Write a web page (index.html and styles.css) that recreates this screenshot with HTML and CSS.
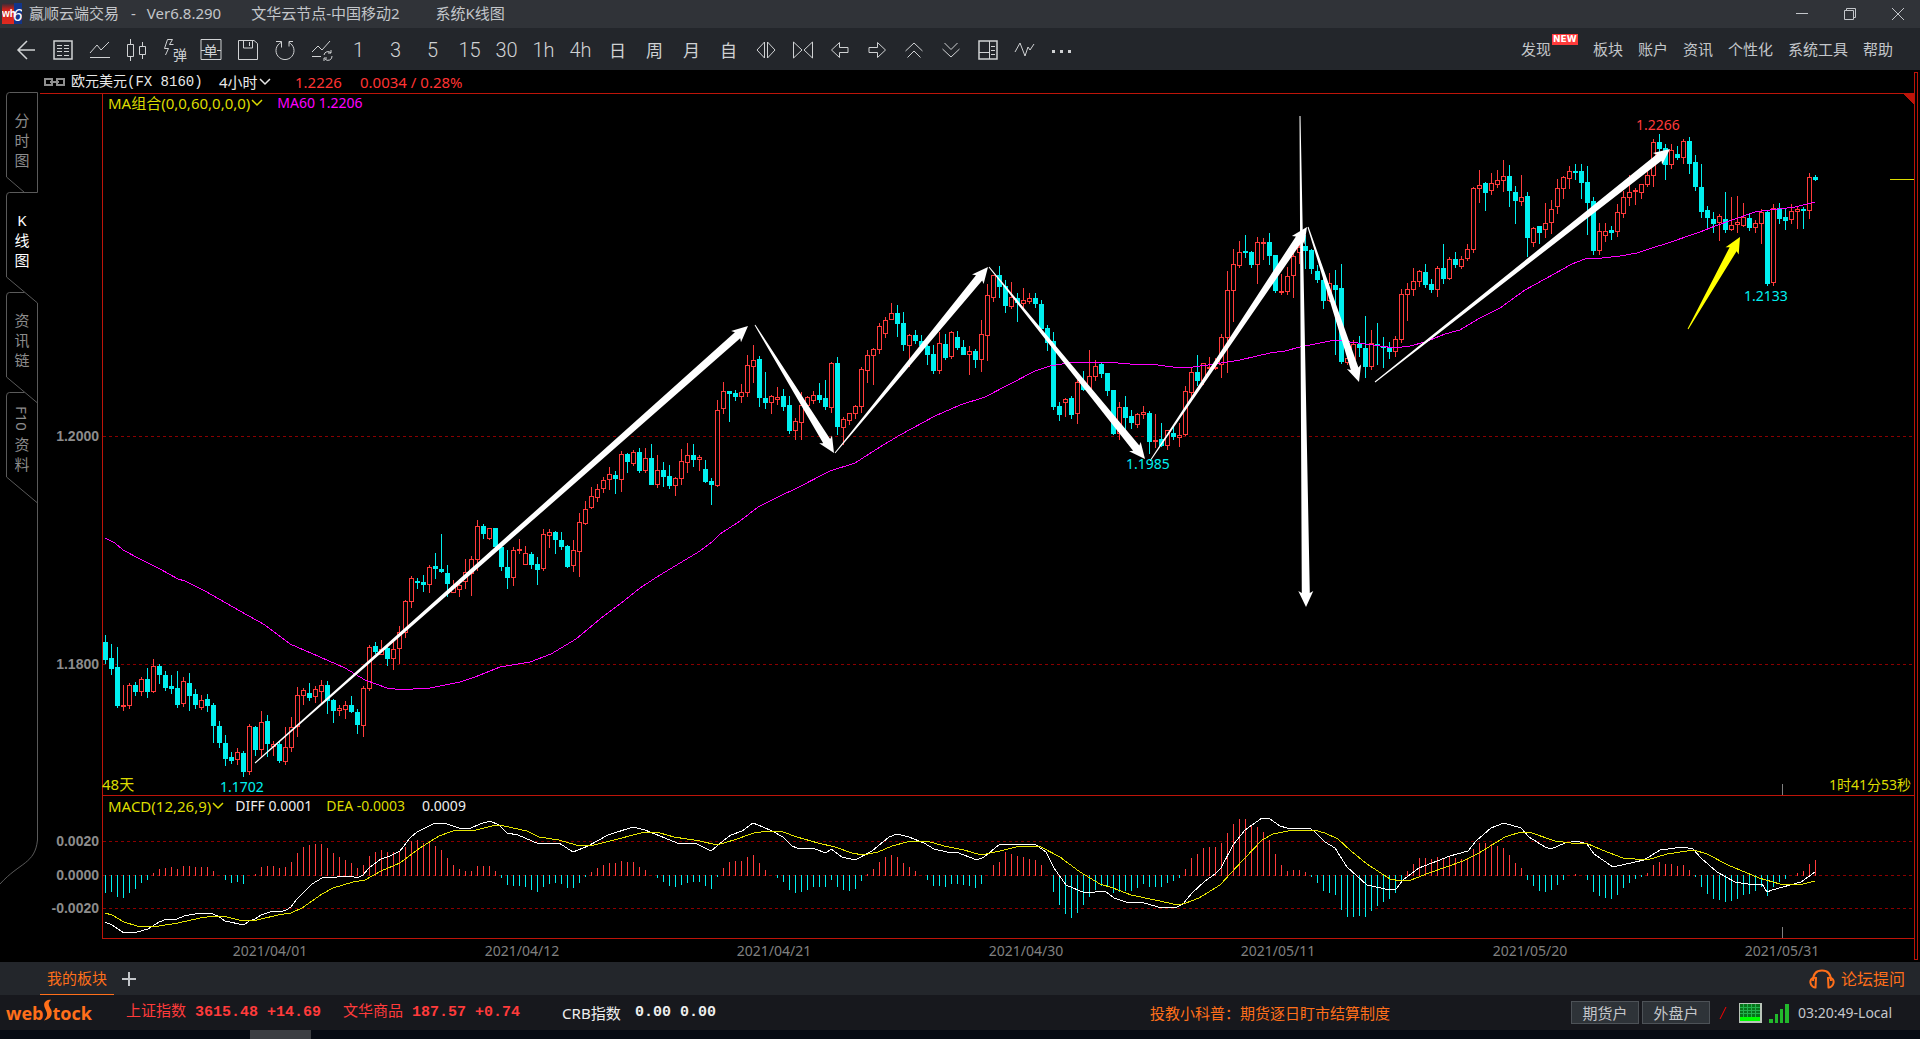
FILE: index.html
```html
<!DOCTYPE html>
<html lang="zh-CN">
<head>
<meta charset="utf-8">
<title>赢顺云端交易</title>
<link rel="stylesheet" href="styles.css">
</head>
<body>
<header class="titlebar">
  <svg class="app-logo" viewBox="0 0 20 21" aria-hidden="true">
    <defs><linearGradient id="lg" x1="0" y1="0" x2="0" y2="1"><stop offset="0" stop-color="#2a2f3a"/><stop offset=".3" stop-color="#c8201a"/><stop offset="1" stop-color="#e02a20"/></linearGradient></defs>
    <rect width="12" height="21" fill="url(#lg)"/><rect x="12" width="8" height="21" fill="#12358a"/>
    <text x="0" y="14" class="logo-wh">wh</text><text x="11" y="18" class="logo-six">6</text>
  </svg>
  <h1 class="title">赢顺云端交易</h1><span class="title-dash">-</span><span class="title-ver">Ver6.8.290</span>
  <span class="title-node">文华云节点-中国移动2</span><span>系统K线图</span>
  <div class="window-buttons">
    <button aria-label="最小化"><svg viewBox="0 0 12 12"><path d="M0 5.500H12"/></svg></button>
    <button aria-label="还原"><svg viewBox="0 0 12 12"><path d="M.5 2.500h9v9h-9zM2.500 2.500v-2h9v9h-2"/></svg></button>
    <button aria-label="关闭"><svg viewBox="0 0 12 12"><path d="M0 0L12 12M12 0L0 12"/></svg></button>
  </div>
</header>

<div class="toolbar">
  <div class="tools">
    <button aria-label="返回"><svg viewBox="0 0 24 24"><path class="bold" d="M4 12H21M13 3L4 12L13 21"/></svg></button>
    <button aria-label="报价"><svg viewBox="0 0 24 24"><path class="bold" d="M3 3h18v18H3z"/><path d="M6 7.500h5M13 7.500h5M6 10.500h5M13 10.500h5M6 13.500h5M13 13.500h5M6 17.500h5M13 17.500h5"/></svg></button>
    <button aria-label="分时"><svg viewBox="0 0 24 24"><path d="M2 15L9 7L13 12L21 4M2 19.500H22"/></svg></button>
    <button aria-label="K线"><svg viewBox="0 0 24 24"><path d="M2.500 6.500h6v12h-6zM5.500 1v5M5.500 18v5M14.500 8.500h6v8h-6zM17.500 4v4M17.500 16v5"/></svg></button>
    <button aria-label="弹"><svg viewBox="0 0 24 24"><path d="M5.500 1.500L2.500 10.500H6.500L3.500 17M5.500 1.500h5l-3 5h4"/></svg><span class="glyph-over small">弹</span></button>
    <button aria-label="下单"><svg viewBox="0 0 24 24"><path d="M2 1.500h20v20H2zM2 12.500h4M18 12.500h4"/></svg><span class="glyph-over">单</span></button>
    <button aria-label="保存"><svg viewBox="0 0 24 24"><path d="M2.500 2.500H18l3.500 3v16h-19zM7.500 3v7h9v-7M13.500 4v4"/></svg></button>
    <button aria-label="刷新"><svg viewBox="0 0 24 24"><path d="M8 4.500A9 9 0 1 0 16 4.500M3 3.500h5.500v6M20 3.500h-4v5"/></svg></button>
    <button aria-label="切换"><svg viewBox="0 0 24 24"><path d="M2 14L8 8L12 12L20 3M2 18.500H11M14 17a4 4 0 0 1 7-2M21 12v3h-3M22 18a4 4 0 0 1-7 3M14 23v-3h3"/></svg></button>
    <button>1</button><button>3</button><button>5</button><button>15</button><button>30</button><button>1h</button><button>4h</button>
    <button class="cjk">日</button><button class="cjk">周</button><button class="cjk">月</button><button class="cjk">自</button>
    <button aria-label="缩小"><svg viewBox="0 0 24 24"><path d="M10.500 4v16L3 12zM13.500 4v16L21 12z"/></svg></button>
    <button aria-label="放大"><svg viewBox="0 0 24 24"><path d="M2.500 4v16L11 12zM21.500 4v16L13 12z"/></svg></button>
    <button aria-label="左移"><svg viewBox="0 0 24 24"><path d="M11.500 4.500V9.500H20v5H11.500v5L3.500 12z"/></svg></button>
    <button aria-label="右移"><svg viewBox="0 0 24 24"><path d="M12.500 4.500V9.500H4v5h8.500v5L20.500 12z"/></svg></button>
    <button aria-label="上翻"><svg viewBox="0 0 24 24"><path d="M3.500 13L12 5L20.500 13M5.500 19.500L12 13L18.500 19.500"/></svg></button>
    <button aria-label="下翻"><svg viewBox="0 0 24 24"><path d="M3.500 11L12 19L20.500 11M5.500 5L12 11.500L18.500 5"/></svg></button>
    <button aria-label="分栏"><svg viewBox="0 0 24 24"><path class="bold" d="M3 3h18v18H3z"/><path d="M13.500 3v18M3 14.500h10M15 8.500h4M15 12.500h4M15 16.500h4"/></svg></button>
    <button aria-label="画线"><svg viewBox="0 0 24 24"><path d="M2 14L7 5L12 18L15 9L17 12L21 6"/></svg></button>
    <button aria-label="更多"><svg viewBox="0 0 24 24"><path class="fill" d="M2 12h3v3H2zM10 12h3v3h-3zM18 12h3v3h-3z"/></svg></button>
  </div>
  <nav class="menu">
    <a href="#" class="discover">发现<span class="new">NEW</span></a><a href="#">板块</a><a href="#">账户</a><a href="#">资讯</a><a href="#">个性化</a><a href="#">系统工具</a><a href="#">帮助</a>
  </nav>
</div>

<main class="workspace">
  <nav class="side">
    <svg class="side-outline" viewBox="0 70 40 892" aria-hidden="true"><path d="M24.500 192.500L6.500 177V96Q6.500 92.500 9.500 92.500H37.500V192.500H9.500Q6.500 192.500 6.500 196V277L37.500 303V840C35 864 20 862 0 884M24.500 292.500H9.500Q6.500 292.500 6.500 296V377L37.500 403M24.500 392.500H9.500Q6.500 392.500 6.500 396V477L37.500 503"/></svg>
    <button><span>分时图</span></button>
    <button class="active"><span>K线图</span></button>
    <button><span>资讯链</span></button>
    <button><span><i>F10</i>资料</span></button>
  </nav>
  <section class="chart">
    <div class="quote">
      <svg class="link-icon" viewBox="0 0 21 8"><path d="M8 5v2H1V1h7v2M13 3V1h7v6h-7V5M6 4h9"/></svg>
      <span class="symbol">欧元美元(FX 8160)</span>
      <button class="period">4小时<svg class="chev" viewBox="0 0 12 8"><path d="M1 1L6 6L11 1"/></svg></button>
      <span class="last">1.2226</span><span class="change">0.0034 / 0.28%</span>
    </div>
    <div class="plot">
      <svg id="plot" class="canvas" viewBox="40 93 1874 869" role="img" aria-label="K线图">
        <g class="grid"><path d="M103 436.500H1912M103 664.500H1912M103 841.500H1912M103 875.500H1912M103 908.500H1912"/></g>
        <g class="frame"><path d="M40 93.500H1914M102.500 93V938.500H1914M102 795.500H1914"/><path class="corner" d="M1903 93H1914V105z"/></g>
        <g class="ticks"><path d="M1782.500 784V795M1782.500 927V938"/></g>
        <path class="now" d="M1890 179.500H1914"/>
        <g id="hist"></g><g id="candles"></g><g id="lines"></g><g id="arrows"></g>
        <g class="axis">
          <text x="99" y="441">1.2000</text><text x="99" y="669">1.1800</text>
          <text x="99" y="846">0.0020</text><text x="99" y="880">0.0000</text><text x="99" y="913">-0.0020</text>
        </g>
        <g class="dates">
          <text x="270" y="956">2021/04/01</text><text x="522" y="956">2021/04/12</text><text x="774" y="956">2021/04/21</text><text x="1026" y="956">2021/04/30</text><text x="1278" y="956">2021/05/11</text><text x="1530" y="956">2021/05/20</text><text x="1782" y="956">2021/05/31</text>
        </g>
        <g class="marks">
          <text class="hi" x="1636" y="130">1.2266</text><text x="1744" y="301">1.2133</text><text x="1126" y="469">1.1985</text><text x="220" y="792">1.1702</text>
          <text class="info days" x="102" y="790">48天</text><text class="info end" x="1911" y="790">1时41分53秒</text>
        </g>
      </svg>
      <div class="legend legend-main">
        <button>MA组合(0,0,60,0,0,0)<svg class="chev" viewBox="0 0 12 8"><path d="M1 1L6 6L11 1"/></svg></button><span class="ma">MA60 1.2206</span>
      </div>
      <div class="legend legend-macd">
        <button>MACD(12,26,9)<svg class="chev" viewBox="0 0 12 8"><path d="M1 1L6 6L11 1"/></svg></button><span class="diff">DIFF 0.0001</span><span class="dea">DEA -0.0003</span><span class="diff">0.0009</span>
      </div>
    </div>
  </section>
  <div class="rail"></div>
</main>

<div class="tabs">
  <button class="tab">我的板块</button>
  <button class="add" aria-label="添加"><svg viewBox="0 0 14 14"><path d="M7 0V14M0 7H14"/></svg></button>
  <a href="#" class="forum"><svg viewBox="0 0 26 20"><path d="M4 12C4 4 8 1.500 13 1.500S22 4 22 12"/><path d="M7 9C2 8 1 12 1.500 14S4 19 6.500 18.500zM19 9C24 8 25 12 24.500 14S22 19 19.500 18.500z"/></svg>论坛提问</a>
</div>

<footer class="status">
  <span class="brand">web<svg viewBox="0 0 10 24" aria-hidden="true"><path d="M9 0C2 0 0 4 2 9C4 14 7 17 1 23C9 22 11 16 9 11C6 6 5 4 9 0z"/></svg>tock</span>
  <span class="idx">上证指数 <b>3615.48 +14.69</b></span><span class="idx">文华商品 <b>187.57 +0.74</b></span>
  <span class="crb">CRB指数</span><b class="crb-val">0.00 0.00</b>
  <a href="#" class="news">投教小科普：期货逐日盯市结算制度</a>
  <div class="session">
    <button>期货户</button><button>外盘户</button>
    <svg class="slash" viewBox="0 0 8 14"><path d="M1 13L7 1"/></svg>
    <svg class="meter" viewBox="0 0 23 20"><path class="m-bg" d="M0 0H23V20H0z"/><path class="m-grid" d="M1 1H21V14H1z"/><path class="m-dots" d="M1 4.500H21M1 7.500H21M1 10.500H21M4.500 1V14M8.500 1V14M12.500 1V14M16.500 1V14"/><path class="m-fill" d="M1 14H21V18H1z"/></svg>
    <svg class="signal" viewBox="0 0 20 20"><path d="M0 16h4v4H0zM6 11h3v9H6zM11 6h3v14h-3zM16 1h4v19h-4z"/></svg>
    <span class="clock">03:20:49-Local</span>
  </div>
</footer>
<div class="taskbar"><span class="task"></span></div>
<script src="chart.js"></script>
</body>
</html>
```
FILE: styles.css
```css
* { box-sizing: border-box; }
body {
  margin: 0; min-height: 100vh; display: flex; flex-direction: column;
  background: #000; color: #c3c6ca; overflow-x: hidden;
  font: 15px/20px "Noto Sans", "Noto Sans CJK SC", sans-serif;
}
button { background: none; border: 0; padding: 0; color: inherit; font: inherit; }
a { color: inherit; text-decoration: none; }
svg { display: block; fill: none; stroke: currentColor; }

.titlebar { display: flex; align-items: center; height: 28px; padding: 0 16px 2px 2px; background: #303338; }
.app-logo { width: 20px; height: 21px; stroke: none; margin-right: 7px; }
.logo-wh { font: bold 10px "Liberation Sans", sans-serif; fill: #fff; }
.logo-six { font: italic 17px "Liberation Sans", sans-serif; fill: #fff; }
.title { font-size: 15px; font-weight: 400; margin: 0; }
.title-dash { margin: 0 11px 0 12px; }
.title-ver { margin-right: 30px; }
.title-node { margin-right: 36px; }
.window-buttons { margin-left: auto; display: flex; gap: 36px; padding-top: 2px; }
.window-buttons svg { width: 12px; height: 12px; }

.toolbar { display: flex; align-items: center; justify-content: space-between; height: 42px; padding: 0 27px 0 7px; background: #23262b; }
.tools { display: flex; padding-top: 2px; }
.tools button { position: relative; display: grid; place-items: center; width: 37px; height: 40px; font: 300 20px/24px Roboto, sans-serif; color: #d0d2d4; }
.tools button.cjk { font: 400 17px/24px "Noto Sans CJK SC", sans-serif; }
.tools svg { width: 24px; height: 24px; }
.tools .bold { stroke-width: 1.5; }
.tools .fill { fill: currentColor; stroke: none; }
.glyph-over { position: absolute; font: 14px/16px "Noto Sans CJK SC", sans-serif; }
.glyph-over.small { right: 5px; bottom: 8px; }
.menu { display: flex; gap: 15px; }
.discover { position: relative; margin-right: 27px; }
.new { position: absolute; left: 31px; top: -5px; width: 26px; height: 11px; background: #ff3b3b; color: #fff; font: bold 9px/11px "DejaVu Sans", sans-serif; text-align: center; }

.workspace { display: flex; }
.side { position: relative; width: 40px; flex: none; padding-top: 22px; }
.side-outline { position: absolute; left: 0; top: 0; width: 40px; stroke: #5a5a5a; }
.side button { position: relative; display: grid; place-items: center; width: 38px; height: 100px; padding: 0 0 4px 6px; color: #8c8c8c; }
.side span { display: block; width: 16px; word-break: break-all; text-align: center; line-height: 20px; }
.side i { writing-mode: vertical-rl; font-style: normal; line-height: 16px; }
.side .active { color: #fff; }

.chart { flex: 1; min-width: 0; }
.quote { display: flex; align-items: center; height: 23px; padding-left: 4px; color: #e8e8e8; font-size: 15px; }
.link-icon { width: 21px; height: 8px; margin-right: 6px; stroke: #8f8f8f; stroke-width: 2; }
.symbol { width: 148px; font-family: "Liberation Mono", "Noto Sans CJK SC", monospace; font-size: 14px; }
.period { display: flex; align-items: center; gap: 1px; width: 76px; font-size: 15px; }
.chev { width: 12px; height: 8px; stroke-width: 1.5; }
.last { width: 65px; color: #f33; }
.change { color: #f33; }
.plot { position: relative; }
.canvas { width: 100%; height: auto; }
.legend { position: absolute; left: 68px; display: flex; font-size: 14px; line-height: 20px; }
.legend button { display: flex; align-items: center; gap: 1px; color: #dcdc00; font-size: 15px; }
.legend-main { top: 0; }
.legend-macd { top: 81%; margin-top: -1px; }
.legend .ma { color: #f0f; margin-left: 14px; }
.legend .diff { color: #eee; margin-left: 11px; }
.legend .dea { color: #dcdc00; margin-left: 14px; }
.legend .dea + .diff { margin-left: 17px; }

.frame { stroke: #bd1409; shape-rendering: crispEdges; }
.corner { fill: #bd1409; stroke: none; }
.grid { stroke: #8b0000; stroke-dasharray: 3 3; shape-rendering: crispEdges; }
.ticks { stroke: #808080; }
.now { stroke: #dcdc00; }
.axis { font: bold 14px "Liberation Sans", sans-serif; fill: #8c8c8c; stroke: none; text-anchor: end; }
.dates { font-size: 14px; fill: #808080; stroke: none; text-anchor: middle; }
.marks { font-size: 14px; fill: #00f0f0; stroke: none; }
.hi { fill: #ff3b3b; }
.info { fill: #dcdc00; }
.days { font-size: 15px; }
.end { text-anchor: end; }
.up { fill: #000; stroke: #ff3b3b; shape-rendering: crispEdges; }
.down { fill: #00f0f0; stroke: none; shape-rendering: crispEdges; }
.rise { fill: #ff3b3b; stroke: none; shape-rendering: crispEdges; }
#lines { shape-rendering: crispEdges; }
.ma-line { stroke: #f0f; }
.diff-line { stroke: #fff; }
.dea-line { stroke: #e6e600; }
.arrow { fill: #fff; stroke: none; }
.arrow.yellow { fill: #ff0; }
.rail { flex: none; width: 4px; margin: 2px 2px 2px 0; border: 1px solid #bd1409; }

.tabs { display: flex; align-items: center; height: 33px; padding: 0 15px 0 40px; background: #23262b; color: #ff6f1a; }
.tab { width: 74px; height: 32px; border-bottom: 1px solid #ff6f1a; }
.add { margin-left: 8px; color: #c3c6ca; }
.add svg { width: 14px; height: 14px; stroke-width: 2; }
.forum { display: flex; align-items: center; gap: 6px; margin-left: auto; font-size: 16px; }
.forum svg { width: 26px; height: 20px; stroke-width: 2; }

.status { position: relative; display: flex; align-items: center; height: 35px; padding: 0 25px 0 6px; background: #17181d; }
.brand { display: flex; align-items: center; width: 120px; color: #ff6f1a; font: bold 18px/24px "Open Sans", sans-serif; }
.brand svg { width: 9px; height: 25px; margin-bottom: 4px; fill: currentColor; stroke: none; }
.idx { margin-right: 22px; color: #ff3b3b; font: 15px/20px "Liberation Mono", "Noto Sans CJK SC", monospace; }
.crb { margin-left: 20px; width: 73px; color: #eee; }
.crb-val { color: #eee; font: bold 15px/20px "Liberation Mono", monospace; }
.news { margin-left: auto; color: #ff6f1a; }
.session { display: flex; align-items: center; margin-left: 181px; }
.session button { width: 68px; height: 23px; margin-right: 3px; background: #2e3338; border: 1px solid #4d5257; line-height: 20px; }
.slash { width: 8px; height: 14px; margin: 0 12px 0 6px; stroke: #f00; }
.meter { width: 23px; height: 20px; stroke: none; }
.m-bg { fill: #b9c4b9; }
.m-grid { fill: #07731a; }
.m-dots { stroke: #22b14c; }
.m-fill { fill: #0f0; }
.signal { width: 20px; height: 20px; margin: 0 9px 0 7px; fill: #22b92c; stroke: none; }
.clock { width: 97px; font-size: 14px; white-space: nowrap; }
.taskbar { flex: 1; min-height: 9px; padding-left: 250px; background: #060b13; }
.task { display: block; width: 61px; height: 9px; background: #3b3e42; }
```
FILE: chart.js
```js
// Candles: direction, high, body top, body bottom, low, in thirds of a pixel below each block's base.
const BLOCKS = [
  [500, `d405 426 480 492|d432 474 507 525|d441 501 618 624|u555 615 621 633|u549 555 618 627|d546 555 576 588|u531 537 576 588|d504 537 576 594|u477 498 576 579|d492 498 525 552|d513 525 564 573|d525 558 567 582|d513 564 615 624|u531 543 612 621|d519 549 588 633|d567 582 615 627|u585 600 624 630|d582 597 618 636|d609 615 678 729|d663 678 729 744|d705 729 777 798|d756 771 783 792|u744 756 780 795|d753 759 816 831|u672 678 816 825|d678 681 750 768|u633 666 750 771|d645 663 732 771|u723 732 741 768|d726 732 783 789|u681 741 786 795|u651 681 744 756|u561 585 681 711|u564 570 588 615|d549 579 594 603|u558 567 591 609|u540 555 576 609|d543 555 603 642|d597 600 633 669|u615 624 633 648|u603 615 630 657|d588 615 636 639|d627 636 675 702|u558 564 678 711|u435 441 567 573|d426 438 456 462|u420 447 465 465|d441 444 477 498|u426 447 477 510|u378 396 447 492|u300 303 399 414|u228 234 306 324|d234 243 249 267|d225 246 255 276|u195 201 255 279|d159 198 207 237|d102 207 216 219|d195 219 252 291|u240 258 279 279|u246 255 270 291|u177 216 246 267|u168 177 222 288|u60 78 180 213|d72 78 102 117|u84 84 117 120`],
  [300, `d684 684 741 744|d738 741 801 813|d750 801 834 867|u741 750 834 858|u717 747 753 762|u738 759 795 795|d756 762 795 807|d771 792 810 855|u687 702 807 813|u687 696 708 744|d693 696 720 762|d696 720 741 750|d735 738 801 804|u720 750 798 816|u639 666 756 831|u603 627 672 675|u561 588 624 627|u552 567 594 606|u531 540 567 579|u501 522 540 570|d513 525 537 582|u453 462 540 576|d459 462 486 519|u450 456 492 498|d444 456 513 519|u444 474 513 519|d432 474 555 555|u465 510 555 564|d486 510 531 561|d495 528 558 567|u531 534 558 588|u447 483 537 555|u429 465 489 519|d432 465 480 501|u465 471 480 513|d480 507 546 549|d534 543 555 615|u300 330 558 561|u246 273 327 342|d273 273 282 366|d270 279 291 303|u252 276 291 309|u165 195 279 291|u135 180 201 249|d168 177 294 321|d216 294 309 327|u285 288 309 342|u261 291 300 315|d267 288 321 333|d288 315 393 402|u354 363 393 420|u276 315 369 420`],
  [230, `u498 501 528 531|u483 495 513 522|d459 495 510 519|d450 504 531 540|u396 399 534 549|d381 399 591 615|u561 567 594 645|u549 549 573 585|u525 528 552 567|u411 417 531 549|u360 375 423 459|u354 357 378 465|u279 288 360 372|u261 270 312 324|u219 249 270 270|d225 249 282 321|d246 279 345 363|u312 315 348 411|d300 315 333 342|d315 333 348 360|d345 348 375 405|d345 372 423 432|u306 339 423 432|d312 342 384 390|u303 306 381 387|d303 321 354 360|d330 351 375 375|u348 363 375 435|d357 363 390 414|u270 312 390 426|u162 195 318 393|u135 135 204 216|d108 135 171 204|d150 168 228 249|u156 201 231 237|d189 204 219 276|u174 210 222 237|u189 204 216 222|d189 204 222 234|d210 222 297 300|d285 294 339 363|d306 333 531 540|d516 528 555 573|u504 507 519 561|d498 504 555 567|u450 456 552 582|d423 456 480 483|u360 438 480 486|u390 408 441 453|d396 402 432 444|d429 429 483 498|d480 480 612 615|u516 531 612 630|d498 531 564 600|d540 558 579 597|u549 552 585 594|u528 546 555 567|d543 549 636 672|u552 630 636 654|d579 627 648 650|u600 600 648 660|d588 609 621 630|u579 615 624 651|u468 483 615 618|u411 426 489 510|d375 426 453 468|u399 399 453 465`],
  [180, `u531 561 567 570|u534 560 567 570|u462 471 555 594|u273 330 474 579|u207 252 333 426|u183 216 258 264|d165 213 219 234|d213 216 255 264|u171 186 255 312|u174 186 192 240|d159 186 228 255|d225 225 333 339|u282 333 339 345|u261 288 336 345|u210 228 288 354|u190 200 219 252|d165 198 213 267|d207 210 267 282|d255 273 300 309|d290 300 363 387|u279 309 363 365|d270 315 330 525|d252 324 546 552|u520 534 549 555|u480 492 540 550|d468 492 504 531|d408 504 561 594|u450 489 561 570|d429 492 498 555|d471 498 504 564|d486 501 516 537|u468 477 516 531|u327 342 480 489|u309 327 345 423|u264 303 330 348|u270 273 306 321|d252 276 315 324|d297 312 330 339|u258 264 330 351|d192 264 297 312|u231 237 297 300|d216 237 255 264|u228 237 261 267|u192 207 237 243|u21 24 210 219|u-30 15 27 69|d5 9 39 93|u-20 9 33 45|u-30 0 15 24|u-60 -12 3 36|d-45 -12 33 81|d18 36 63 132|u-15 51 66 78|d36 48 174 231|u141 144 189 201|d138 138 159 192`],
  [100, `u309 369 390 414|u300 327 369 402|u237 264 321 342|u228 231 267 297|u198 213 237 267|d192 213 219 240|d192 213 249 297|d198 246 309 405|d291 303 453 465|u369 393 453 465|u369 393 408 426|d378 390 399 420|u312 336 396 411|u273 291 342 354|u225 276 294 318|u264 270 276 315|u252 252 279 297|u213 225 255 261|u117 126 228 261|d102 126 147 160|d132 144 195 240|u132 150 195 207|d138 162 174 180|u117 123 174 192|d111 123 192 222|d165 186 261 273|d192 261 336 354|d318 330 354 387|d336 357 372 399|u342 348 369 423|d276 357 390 399|u291 375 390 393|u288 366 375 399|u309 351 378 381|d339 354 384 393|u360 369 384 399|u327 336 372 432|d333 336 552 558|u312 324 549 558|d309 324 357 372|d327 351 363 390|u312 333 360 372|u318 327 336 387|d321 327 333 387|u219 231 333 357|d225 231 240 243`]
];

// MACD histogram tips, same units; 286 is the zero line of a block based at 780.
const HIST = [
  [780, `338 335 350 353 338 326 308 299 278 267 264 261 266 258 258 261 261 261 273 286 299 308 305 311 286 282 261 258 258 264 261 246 219 201 195 192 192 204 219 231 240 249 264 255 228 216 210 216 216 213 201 184 180 189 190 198 210 234 255 267 273 273 258 258 258 273 293 314 317 317 320 329 335 320 311 308 311 323 323 308 290 276 264 255 249 249`],
  [790, `213 216 216 231 240 257 263 276 287 290 284 278 275 275 287 296 260 234 216 213 213 201 195 219 240 257 264 276 299 308 305 299 290 290 290 269 290 299 302 296 272 251 237 216 201 195 201 219 231 243 257 269 287 287 290 281 281 286 287 293 281 254 225 216`],
  [780, `216 222 228 231 237 240 255 286 335 374 403 413 398 374 350 330 317 320 338 335 332 332 323 311 320 320 320 308 302 293 267 234 222 204 201 201 189 159 132 117 117 135 141 156 180 222 255 273 270 270 276 290 308 332 338 344 389 410 410 407 410 392 377 365 356 338 300 272 252 234 234 237 231 234 231 234 237 237 207 189 189 192 198 204 225 249 264 299 317 332 335 329 314 299 287 282 287 299 335 347 353 356 344 323 308 296 290 279 255 246 252 252 258 255 270 290 320 341 356 359 365 362 356 344 341 332 320 347 320 305 296 286 279 273 252 240`]
];

const MA60 = "105,538 115,543 123,550 140,559 160,569 178,579 185,581 205,591 240,611 265,625 290,644 297,647 320,657 345,668 365,680 387,688 395,689 413,689 430,688 460,682 475,677 500,667 530,662 551,654 576,639 600,619 620,604 640,588 660,575 680,563 700,551 712,542 720,534 740,521 758,507 780,496 795,489 830,471 855,463 880,447 900,435 935,416 960,405 985,397 1010,384 1035,371 1050,366 1075,362 1105,362 1130,364 1150,364 1173,367 1193,367 1215,364 1240,360 1270,353 1285,351 1300,347 1320,343 1335,340 1350,342 1395,348 1410,346 1425,342 1445,334 1460,330 1480,318 1500,308 1525,290 1545,279 1572,264 1585,259 1602,258 1620,256 1637,253 1655,247 1665,244 1700,232 1715,226 1735,219 1755,212 1770,210 1795,207 1815,202";
const DIFF = "105,922 112,925 124,933 137,932 148,929 159,922 167,919 177,919 184,916 200,913 210,913 218,916 225,921 244,925 249,921 255,919 261,915 273,911 280,912 286,910 291,907 297,899 304,892 312,884 322,878 337,877 351,876 357,878 363,875 369,868 381,859 390,856 400,851 410,838 417,832 425,828 435,823 444,823 459,828 471,828 480,824 490,821 499,825 507,833 518,835 539,844 559,843 573,852 588,846 608,835 633,827 645,830 665,838 677,843 697,844 711,851 723,841 731,835 742,831 753,823 763,827 772,831 783,837 792,846 797,848 815,849 826,853 831,849 842,857 855,860 872,851 889,837 897,834 909,837 924,843 934,849 947,852 956,852 977,860 984,857 1000,844 1016,844 1036,845 1046,852 1054,868 1066,885 1085,893 1105,891 1114,898 1126,902 1144,903 1162,908 1177,907 1183,904 1192,893 1205,881 1215,874 1221,868 1233,845 1245,830 1262,818 1270,819 1280,826 1287,828 1309,828 1314,831 1325,842 1335,848 1347,867 1367,885 1390,890 1396,889 1403,880 1419,868 1432,863 1450,856 1468,851 1476,841 1491,828 1504,823 1521,828 1529,837 1545,847 1551,849 1565,843 1577,841 1587,844 1594,854 1613,867 1644,860 1660,850 1683,847 1693,849 1701,858 1717,872 1735,882 1754,885 1762,884 1767,892 1772,890 1801,882 1815,872";
const DEA = "105,913 112,915 124,922 137,926 153,927 178,923 200,918 214,916 227,917 243,921 257,920 278,915 291,913 302,908 322,894 333,888 353,882 365,880 381,871 400,863 420,848 439,836 453,831 476,830 496,825 504,826 527,831 539,837 559,840 576,845 594,845 610,841 645,832 660,833 674,837 700,841 717,845 734,840 754,833 769,831 783,832 797,837 818,843 835,847 852,853 863,855 878,852 892,846 907,842 927,841 944,846 964,850 981,855 1000,851 1020,846 1041,847 1060,857 1080,872 1100,884 1113,888 1131,895 1155,900 1178,905 1186,903 1199,898 1220,885 1231,873 1244,859 1262,840 1273,834 1288,831 1304,830 1314,830 1325,833 1338,839 1351,851 1367,864 1390,879 1401,881 1411,880 1429,873 1463,861 1479,853 1505,837 1521,832 1529,832 1555,841 1571,843 1586,843 1602,850 1623,858 1647,860 1667,854 1694,850 1707,854 1728,865 1759,878 1780,884 1803,884 1815,881";

const ARROWS = [
  [255, 763, 748, 326], [755, 325, 834, 453], [835, 453, 988, 267], [989, 267, 1145, 459], [1150, 461, 1307, 227],
  [1308, 227, 1359, 382], [1300, 116, 1306, 607], [1375, 382, 1670, 149], [1688, 329, 1740, 237, "yellow"]
];

const X0 = 105, STEP = 6;
const px = (base, v) => base + Math.round(v / 3);

let i = 0, upPath = "", downPath = "";
for (const [base, rows] of BLOCKS) {
  for (const row of rows.split("|")) {
    const x = X0 + STEP * i++;
    const [hi, top, bottom, lo] = row.slice(1).split(" ").map(v => px(base, +v));
    if (row[0] === "u") {
      upPath += `M${x + .5} ${hi}V${top}M${x + .5} ${bottom}V${lo}M${x - 1.5} ${top + .5}h4V${bottom - .5}h-4z`;
    } else {
      downPath += `M${x} ${hi}h1V${lo}h-1zM${x - 2} ${top}h5V${bottom}h-5z`;
    }
  }
}
document.getElementById("candles").innerHTML =
  `<path class="up" d="${upPath}"/><path class="down" fill-rule="nonzero" d="${downPath}"/>`;

i = 0;
let pos = "", neg = "";
for (const [base, values] of HIST) {
  for (const v of values.split(" ")) {
    const x = X0 + STEP * i++, y = px(base, +v);
    if (y < 875) pos += `M${x} ${y}h1V876h-1z`;
    if (y > 876) neg += `M${x} 875h1V${y}h-1z`;
  }
}
document.getElementById("hist").innerHTML = `<path class="rise" d="${pos}"/><path class="down" d="${neg}"/>`;

document.getElementById("lines").innerHTML =
  `<polyline class="ma-line" points="${MA60}"/><polyline class="diff-line" points="${DIFF}"/><polyline class="dea-line" points="${DEA}"/>`;

// A tapered shaft that ends in a barbed head.
function arrow([x1, y1, x2, y2, tone = ""]) {
  const len = Math.hypot(x2 - x1, y2 - y1), ux = (x2 - x1) / len, uy = (y2 - y1) / len;
  const at = (along, side) => `${(x1 + ux * along - uy * side).toFixed(1)},${(y1 + uy * along + ux * side).toFixed(1)}`;
  const pts = [at(0, -.5), at(len - 14, -4), at(len - 16, -7.5), at(len, 0), at(len - 16, 7.5), at(len - 14, 4), at(0, .5)];
  return `<polygon class="arrow ${tone}" points="${pts.join(" ")}"/>`;
}
document.getElementById("arrows").innerHTML = ARROWS.map(arrow).join("");
```
